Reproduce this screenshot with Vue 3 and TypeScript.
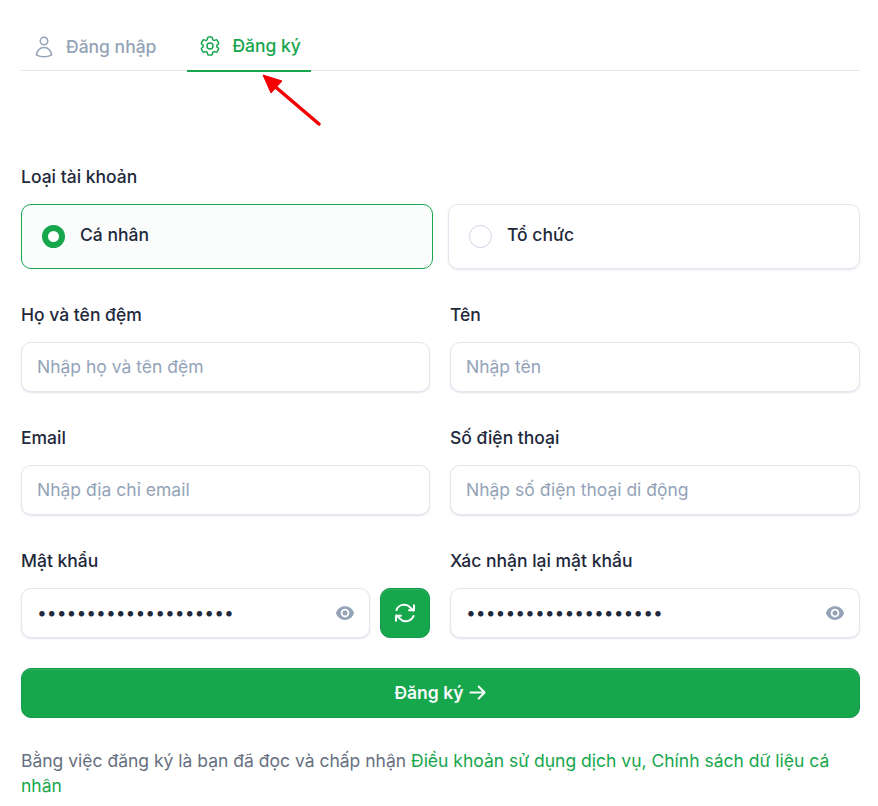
<template>
  <div class="page">
    <div class="tabs">
      <div class="tab">
        <svg class="tab-icon" viewBox="0 0 24 24" fill="none" stroke="currentColor" stroke-width="1.5" stroke-linecap="round" stroke-linejoin="round">
          <path d="M15.75 6a3.75 3.75 0 1 1-7.5 0 3.75 3.75 0 0 1 7.5 0Z" />
          <path d="M4.5 20.12a7.5 7.5 0 0 1 15 0A17.93 17.93 0 0 1 12 21.75c-2.68 0-5.22-.58-7.5-1.63Z" />
        </svg>
        <span>Đăng nhập</span>
      </div>
      <div class="tab active">
        <svg class="tab-icon" viewBox="0 0 24 24" fill="none" stroke="currentColor" stroke-width="1.5" stroke-linecap="round" stroke-linejoin="round">
          <path d="M9.59 3.94c.09-.54.56-.94 1.11-.94h2.59c.55 0 1.02.4 1.11.94l.21 1.28c.06.37.31.68.65.87.08.04.15.09.23.13.33.2.74.27 1.1.13l1.22-.46a1.13 1.13 0 0 1 1.37.49l1.3 2.25c.27.48.16 1.08-.26 1.43l-1 .83c-.3.24-.45.62-.44 1v.27c-.01.38.14.76.44 1l1 .83c.42.35.53.95.26 1.43l-1.3 2.25a1.13 1.13 0 0 1-1.37.49l-1.22-.46c-.36-.14-.77-.07-1.1.13l-.23.13c-.34.19-.59.5-.65.87l-.21 1.28c-.09.54-.56.94-1.11.94h-2.59c-.55 0-1.02-.4-1.11-.94l-.21-1.28a1.3 1.3 0 0 0-.65-.87l-.23-.13c-.33-.2-.74-.27-1.1-.13l-1.22.46a1.13 1.13 0 0 1-1.37-.49l-1.3-2.25a1.13 1.13 0 0 1 .26-1.43l1-.83c.3-.24.45-.62.44-1v-.27c.01-.38-.14-.76-.44-1l-1-.83a1.13 1.13 0 0 1-.26-1.43l1.3-2.25a1.13 1.13 0 0 1 1.37-.49l1.22.46c.36.14.77.07 1.1-.13.08-.04.15-.09.23-.13.34-.19.59-.5.65-.87l.21-1.28Z" />
          <path d="M15 12a3 3 0 1 1-6 0 3 3 0 0 1 6 0Z" />
        </svg>
        <span>Đăng ký</span>
      </div>
    </div>

    <form class="form" @submit.prevent>
      <div class="group">
        <div class="label">Loại tài khoản</div>
        <div class="types">
          <div
            v-for="t in accountTypes"
            :key="t"
            class="type"
            :class="{ selected: accountType === t }"
            @click="accountType = t"
          >
            <span class="radio"></span>
            <span class="type-name">{{ t }}</span>
          </div>
        </div>
      </div>

      <div class="fields">
        <div class="field">
          <label class="label">Họ và tên đệm</label>
          <input class="input" placeholder="Nhập họ và tên đệm" />
        </div>
        <div class="field">
          <label class="label">Tên</label>
          <input class="input" placeholder="Nhập tên" />
        </div>
        <div class="field">
          <label class="label">Email</label>
          <input class="input" placeholder="Nhập địa chỉ email" />
        </div>
        <div class="field">
          <label class="label">Số điện thoại</label>
          <input class="input" placeholder="Nhập số điện thoại di động" />
        </div>
        <div class="field">
          <label class="label">Mật khẩu</label>
          <div class="pw-row">
            <div class="pw">
              <input class="input" type="password" :value="password" />
              <svg class="eye" viewBox="0 0 24 24" fill="currentColor">
                <path d="M12 15a3 3 0 1 0 0-6 3 3 0 0 0 0 6Z" />
                <path fill-rule="evenodd" d="M1.32 11.45C2.81 6.98 7.03 3.75 12 3.75c4.97 0 9.19 3.22 10.68 7.69.12.36.12.75 0 1.11-1.49 4.47-5.71 7.7-10.68 7.7-4.97 0-9.19-3.22-10.68-7.69a1.76 1.76 0 0 1 0-1.11ZM17.25 12a5.25 5.25 0 1 1-10.5 0 5.25 5.25 0 0 1 10.5 0Z" clip-rule="evenodd" />
              </svg>
            </div>
            <button class="regen" type="button" aria-label="Tạo mật khẩu">
              <svg viewBox="0 0 24 24" fill="none" stroke="currentColor" stroke-width="2" stroke-linecap="round" stroke-linejoin="round">
                <path d="M16.02 9.35h5v-5" />
                <path d="M2.98 19.64v-5h5" />
                <path d="M3.4 9.02a8.25 8.25 0 0 1 13.8-2.57l3.18 3.18" />
                <path d="M20.6 14.98a8.25 8.25 0 0 1-13.8 2.57l-3.18-3.18" />
              </svg>
            </button>
          </div>
        </div>
        <div class="field">
          <label class="label">Xác nhận lại mật khẩu</label>
          <div class="pw">
            <input class="input" type="password" :value="password" />
            <svg class="eye" viewBox="0 0 24 24" fill="currentColor">
              <path d="M12 15a3 3 0 1 0 0-6 3 3 0 0 0 0 6Z" />
              <path fill-rule="evenodd" d="M1.32 11.45C2.81 6.98 7.03 3.75 12 3.75c4.97 0 9.19 3.22 10.68 7.69.12.36.12.75 0 1.11-1.49 4.47-5.71 7.7-10.68 7.7-4.97 0-9.19-3.22-10.68-7.69a1.76 1.76 0 0 1 0-1.11ZM17.25 12a5.25 5.25 0 1 1-10.5 0 5.25 5.25 0 0 1 10.5 0Z" clip-rule="evenodd" />
            </svg>
          </div>
        </div>
      </div>

      <button class="submit" type="submit">
        <span>Đăng ký</span>
        <svg viewBox="0 0 24 24" fill="none" stroke="currentColor" stroke-width="2.5" stroke-linecap="round" stroke-linejoin="round">
          <path d="M13.5 4.5 21 12l-7.5 7.5M21 12H3" />
        </svg>
      </button>

      <p class="terms">
        Bằng việc đăng ký là bạn đã đọc và chấp nhận
        <a href="#">Điều khoản sử dụng dịch vụ, Chính sách dữ liệu cá nhân</a>
      </p>
    </form>

    <!-- red annotation arrow drawn over the screenshot -->
    <svg class="annotation" viewBox="0 0 70 60" fill="none">
      <path d="M57 52 10 12" stroke="#f40000" stroke-width="3.5" stroke-linecap="round" />
      <path d="M1 3 20 9 9 21Z" fill="#f40000" stroke="#f40000" stroke-linejoin="round" />
    </svg>
  </div>
</template>

<script setup lang="ts">
import { ref } from 'vue';

const accountTypes = ['Cá nhân', 'Tổ chức'];
const accountType = ref('Cá nhân');
const password = 'abcdefghijklmnopqrst';
</script>

<style scoped>
.page {
  position: relative;
  box-sizing: border-box;
  width: 878px;
  height: 806px;
  padding: 0 18px 0 21px;
  overflow: hidden;
  background: #fff;
  font-family: Inter, 'Noto Sans', sans-serif;
  font-size: 17.5px;
  color: #1e293b;
}

.tabs {
  display: flex;
  gap: 20px;
  height: 71px;
  box-sizing: border-box;
  padding-top: 21px;
  border-bottom: 1px solid #e5e7eb;
}

.tab {
  display: flex;
  align-items: center;
  gap: 10px;
  height: 51px;
  box-sizing: border-box;
  padding: 0 11px;
  font-weight: 500;
  color: #94a3b8;
}

.tab.active {
  padding-right: 10px;
  color: #16a64c;
  border-bottom: 2px solid #16a64c;
}

.tab-icon {
  width: 24px;
  height: 24px;
  flex: none;
}

.form {
  padding-top: 94px;
}

.label {
  display: block;
  height: 24px;
  line-height: 24px;
  font-weight: 500;
  color: #1e293b;
}

.types {
  display: flex;
  gap: 15px;
  margin-top: 15px;
}

.type {
  flex: 1;
  display: flex;
  align-items: center;
  gap: 15px;
  height: 65px;
  box-sizing: border-box;
  padding: 0 20px;
  border: 1px solid #e2e8f0;
  border-radius: 10px;
  box-shadow: 0 1px 2px rgba(100, 116, 139, 0.2);
  font-weight: 500;
  cursor: pointer;
}

.type-name {
  margin-top: -5px;
}

.type.selected {
  border-color: #16a64c;
  background: #fbfdfd;
  box-shadow: none;
}

.radio {
  box-sizing: border-box;
  width: 23px;
  height: 23px;
  border: 1px solid #cbd5e1;
  border-radius: 50%;
  background: #fff;
  flex: none;
}

.selected .radio {
  border: 6.5px solid #16a64c;
}

.fields {
  display: grid;
  grid-template-columns: 409px 1fr;
  column-gap: 20px;
  row-gap: 34px;
  margin-top: 34px;
}

.field {
  display: flex;
  flex-direction: column;
  gap: 15px;
  min-width: 0;
}

.input {
  display: block;
  box-sizing: border-box;
  width: 100%;
  height: 50px;
  padding: 0 15px 1px;
  border: 1px solid #e2e8f0;
  border-radius: 10px;
  outline: none;
  background: #fff;
  box-shadow: 0 1px 2px rgba(100, 116, 139, 0.2);
  font: inherit;
  color: #1e293b;
}

.input::placeholder {
  color: #94a3b8;
}

.pw-row {
  display: flex;
  gap: 10px;
}

.pw {
  position: relative;
  flex: 1;
}

.pw .input {
  padding-right: 44px;
}

.eye {
  position: absolute;
  top: 15px;
  right: 15px;
  width: 20px;
  height: 20px;
  color: #94a3b8;
}

.regen {
  flex: none;
  width: 50px;
  height: 50px;
  display: flex;
  align-items: center;
  justify-content: center;
  padding: 0;
  border: 1px solid #15994a;
  border-radius: 10px;
  background: #16a64c;
  box-shadow: inset 0 1px 0 rgba(255, 255, 255, 0.12);
  color: #fff;
}

.regen svg {
  width: 24px;
  height: 24px;
}

.submit {
  display: flex;
  align-items: center;
  justify-content: center;
  gap: 4px;
  width: 100%;
  height: 50px;
  margin-top: 30px;
  padding: 0 0 2px;
  border: 1px solid #15994a;
  border-radius: 10px;
  background: #16a64c;
  box-shadow: inset 0 1px 0 rgba(255, 255, 255, 0.12);
  font: inherit;
  font-weight: 600;
  color: #f8fafc;
}

.submit svg {
  width: 19px;
  height: 19px;
}

.terms {
  margin: 30px 0 0;
  line-height: 25px;
  color: #667080;
}

.terms a {
  color: #16a64c;
  text-decoration: none;
}

.annotation {
  position: absolute;
  left: 262px;
  top: 72px;
  width: 70px;
  height: 60px;
  pointer-events: none;
}
</style>
